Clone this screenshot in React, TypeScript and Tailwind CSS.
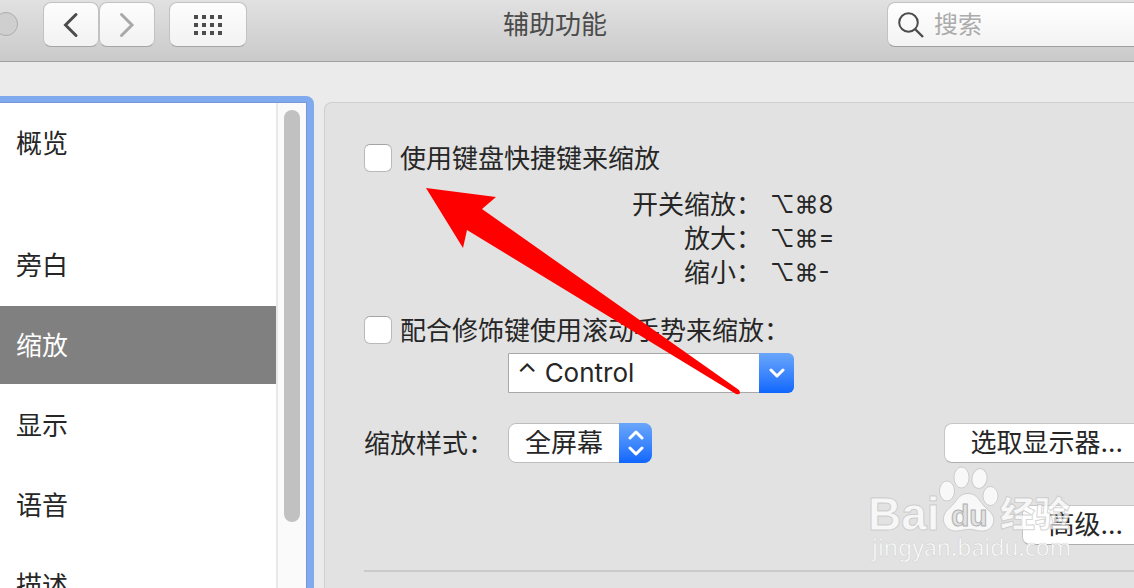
import React from "react";

const sections = [
  { name: "概览", gap: true },
  { name: "旁白" },
  { name: "缩放", active: true },
  { name: "显示" },
  { name: "语音" },
  { name: "描述" },
];

const shortcuts = [
  { name: "开关缩放：", keys: "⌥⌘8" },
  { name: "放大：", keys: "⌥⌘=" },
  { name: "缩小：", keys: "⌥⌘-" },
];

const toolButton =
  "flex h-[45px] items-center justify-center rounded-lg border border-[#c2c2c2] border-b-[#a5a5a5] bg-linear-to-b from-[#fdfdfd] to-[#f2f2f2]";

const pushButton =
  "h-10 shrink-0 rounded-lg border border-[#c6c6c6] border-b-[#adadad] bg-white px-[26px] leading-none whitespace-nowrap";

function Toolbar() {
  return (
    <header className="flex h-[62px] shrink-0 items-start border-b border-[#a0a0a0] bg-linear-to-b from-[#e1e1e1] to-[#cacaca] pt-0.5">
      <span className="mt-[10px] -ml-[6px] size-6 shrink-0 rounded-full border border-[#adadad] bg-[#cfcfcf]" />
      <nav className="ml-[25px] flex shrink-0">
        <button aria-label="后退" className={`${toolButton} w-14`}>
          <svg width="16" height="26" viewBox="0 0 16 26" fill="none" stroke="#4c4c4c" strokeWidth="3" strokeLinecap="round">
            <path d="M13 2.500L2.500 13L13 23.500" />
          </svg>
        </button>
        <button aria-label="前进" className={`${toolButton} w-14`}>
          <svg width="16" height="26" viewBox="0 0 16 26" fill="none" stroke="#a9a9a9" strokeWidth="3" strokeLinecap="round">
            <path d="M2.500 2.500L13 13L2.500 23.500" />
          </svg>
        </button>
        <button aria-label="显示全部" className={`${toolButton} ml-[14px] w-[78px]`}>
          <svg width="28" height="20" viewBox="0 0 28 20" fill="#4c4c4c">
            {[0, 8, 16].map((y) =>
              [0, 8, 16, 24].map((x) => <rect key={`${x}-${y}`} x={x} y={y} width="4" height="4" />),
            )}
          </svg>
        </button>
      </nav>
      <h1 className="flex-1 pr-6 text-center leading-[46px] text-[#4b4b4b]">辅助功能</h1>
      <label className="-mr-[14px] flex h-[45px] w-[261px] shrink-0 items-center rounded-lg border border-[#c2c2c2] border-b-[#a0a0a0] bg-linear-to-b from-white to-[#f3f3f3] pl-[10px]">
        <svg width="26" height="26" viewBox="0 0 26 26" fill="none" stroke="#4c4c4c" strokeWidth="2">
          <circle cx="10.500" cy="10.500" r="9.300" />
          <path d="M17 17L25 25" strokeWidth="2.400" />
        </svg>
        <input
          type="text"
          aria-label="搜索"
          placeholder="搜索"
          className="ml-[10px] w-40 bg-transparent text-2xl outline-none placeholder:text-[#ababab]"
        />
      </label>
    </header>
  );
}

function Sidebar() {
  return (
    <aside className="mt-[34px] flex w-[314px] shrink-0 rounded-tr-lg border-t-[6px] border-r-[7px] border-[#80a9ee] bg-white">
      <div className="flex min-w-0 flex-1 overflow-hidden border-t border-r border-[#7698d8]">
        <ul className="flex flex-1 flex-col gap-0.5 pt-px">
          {sections.map((s) => (
            <li key={s.name} className={s.gap ? "mb-[42px]" : ""}>
              <button
                className={`flex h-[78px] w-full items-center pl-4 ${
                  s.active ? "bg-[#808080] text-white" : ""
                }`}
              >
                {s.name}
              </button>
            </li>
          ))}
        </ul>
        <div className="w-[30px] border-l-2 border-[#e8e8e8] bg-[#fafafa] pt-[7px] pl-1.5">
          <div className="h-[412px] w-4 rounded-full bg-[#c1c1c1]" />
        </div>
      </div>
    </aside>
  );
}

function CheckRow({ text }: { text: string }) {
  return (
    <label className="flex h-7 items-center gap-2 whitespace-nowrap">
      <input
        type="checkbox"
        className="size-7 shrink-0 appearance-none rounded-md border border-[#b9b9b9] border-t-[#a3a3a3] bg-white"
      />
      {text}
    </label>
  );
}

function Settings() {
  return (
    <main className="mt-10 -mr-px ml-[10px] min-w-0 flex-1 overflow-hidden rounded-tl-lg border border-b-0 border-[#cfcfcf] bg-[#e2e2e2] pt-[41px] pl-[39px]">
      <CheckRow text="使用键盘快捷键来缩放" />
      <dl className="mt-4 leading-[34px]">
        {shortcuts.map((s) => (
          <div key={s.name} className="flex gap-2">
            <dt className="w-[398px] text-right">{s.name}</dt>
            <dd className="text-2xl leading-[34px]">{s.keys}</dd>
          </div>
        ))}
      </dl>
      <div className="mt-[26px]">
        <CheckRow text="配合修饰键使用滚动手势来缩放：" />
      </div>
      <div className="mt-[9px] ml-36 grid h-10 w-[286px]">
        <select
          aria-label="修饰键"
          className="appearance-none rounded-r-lg border border-[#a8a8a8] bg-white pl-2 leading-none [grid-area:1/1]"
        >
          <option>⌃ Control</option>
        </select>
        <span className="pointer-events-none flex w-[35px] items-center justify-center justify-self-end rounded-r-md bg-linear-to-b from-[#69a6fb] to-[#0d66fd] [grid-area:1/1]">
          <svg width="16" height="10" viewBox="0 0 16 10" fill="none" stroke="white" strokeWidth="3" strokeLinecap="round" strokeLinejoin="round">
            <path d="M2 2L8 8L14 2" />
          </svg>
        </span>
      </div>
      <div className="mt-[30px] flex items-center">
        <label htmlFor="zoom-style" className="w-36 shrink-0 whitespace-nowrap">
          缩放样式：
        </label>
        <div className="grid h-10 w-36 shrink-0">
          <select
            id="zoom-style"
            className="appearance-none rounded-lg border border-[#bdbdbd] bg-white pl-4 leading-none [grid-area:1/1]"
          >
            <option>全屏幕</option>
          </select>
          <span className="pointer-events-none flex w-[33px] items-center justify-center justify-self-end rounded-r-lg bg-linear-to-b from-[#69a6fb] to-[#0d66fd] [grid-area:1/1]">
            <svg width="16" height="26" viewBox="0 0 16 26" fill="none" stroke="white" strokeWidth="3" strokeLinecap="round" strokeLinejoin="round">
              <path d="M2 8L8 2L14 8M2 18L8 24L14 18" />
            </svg>
          </span>
        </div>
        <button className={`${pushButton} -mr-4 ml-auto`}>选取显示器...</button>
      </div>
      <div className="mt-[42px] -mr-4 flex justify-end">
        <button className={pushButton}>高级...</button>
      </div>
      <hr className="mt-[25px] border-t-2 border-[#cacaca]" />
    </main>
  );
}

function Watermark() {
  return (
    <svg
      className="pointer-events-none absolute top-[460px] right-[54px]"
      width="214"
      height="110"
      viewBox="0 0 214 110"
      fill="#ffffff"
      fillOpacity="0.75"
      stroke="#b9b9b9"
      strokeOpacity="0.6"
      strokeWidth="1"
    >
      <ellipse cx="81" cy="31" rx="7.500" ry="10" />
      <ellipse cx="95.500" cy="17.500" rx="7.500" ry="10.500" />
      <ellipse cx="113.500" cy="18.500" rx="7.500" ry="10" transform="rotate(10 113.500 18.500)" />
      <ellipse cx="124.500" cy="36" rx="7.500" ry="9.500" />
      <path d="M102 33.500C92 33.500 91 42 84 47.500C77 53 76 60 79 65C83 72 91 71.500 97 70C101 69 105 69 109 70C115 71.500 122 72 126 66C130 59 127 54 120 48C113 42 112 33.500 102 33.500Z" />
      <g fontFamily="Liberation Sans, Arial, sans-serif" fontWeight="700">
        <text x="2" y="70" fontSize="46">Bai</text>
        <text x="85" y="66" fontSize="30" fill="#e2e2e2" fillOpacity="1" stroke="#b0b0b0" strokeOpacity="1">du</text>
      </g>
      <text x="134" y="67" fontSize="35" fontWeight="900" fontFamily="Noto Sans CJK SC, sans-serif">经验</text>
      <text x="6" y="96" fontSize="23" fillOpacity="0.900" strokeWidth="0.500" fontFamily="Noto Sans, sans-serif">jingyan.baidu.com</text>
    </svg>
  );
}

export default function App() {
  return (
    <div className="relative flex h-screen flex-col overflow-hidden bg-[#ebebeb] font-[Inter,'Noto_Sans_CJK_SC',sans-serif] text-[26px] text-[#262626]">
      <Toolbar />
      <div className="flex min-h-0 flex-1 overflow-hidden">
        <Sidebar />
        <Settings />
      </div>
      <Watermark />
      <svg
        className="pointer-events-none absolute top-[188px] left-[426px]"
        width="320"
        height="210"
        viewBox="0 0 320 210"
        fill="#ff0000"
      >
        <path d="M0 0L70 9L56 21L313 202Q316 207 310 206L41 42L37 60Z" />
      </svg>
    </div>
  );
}
